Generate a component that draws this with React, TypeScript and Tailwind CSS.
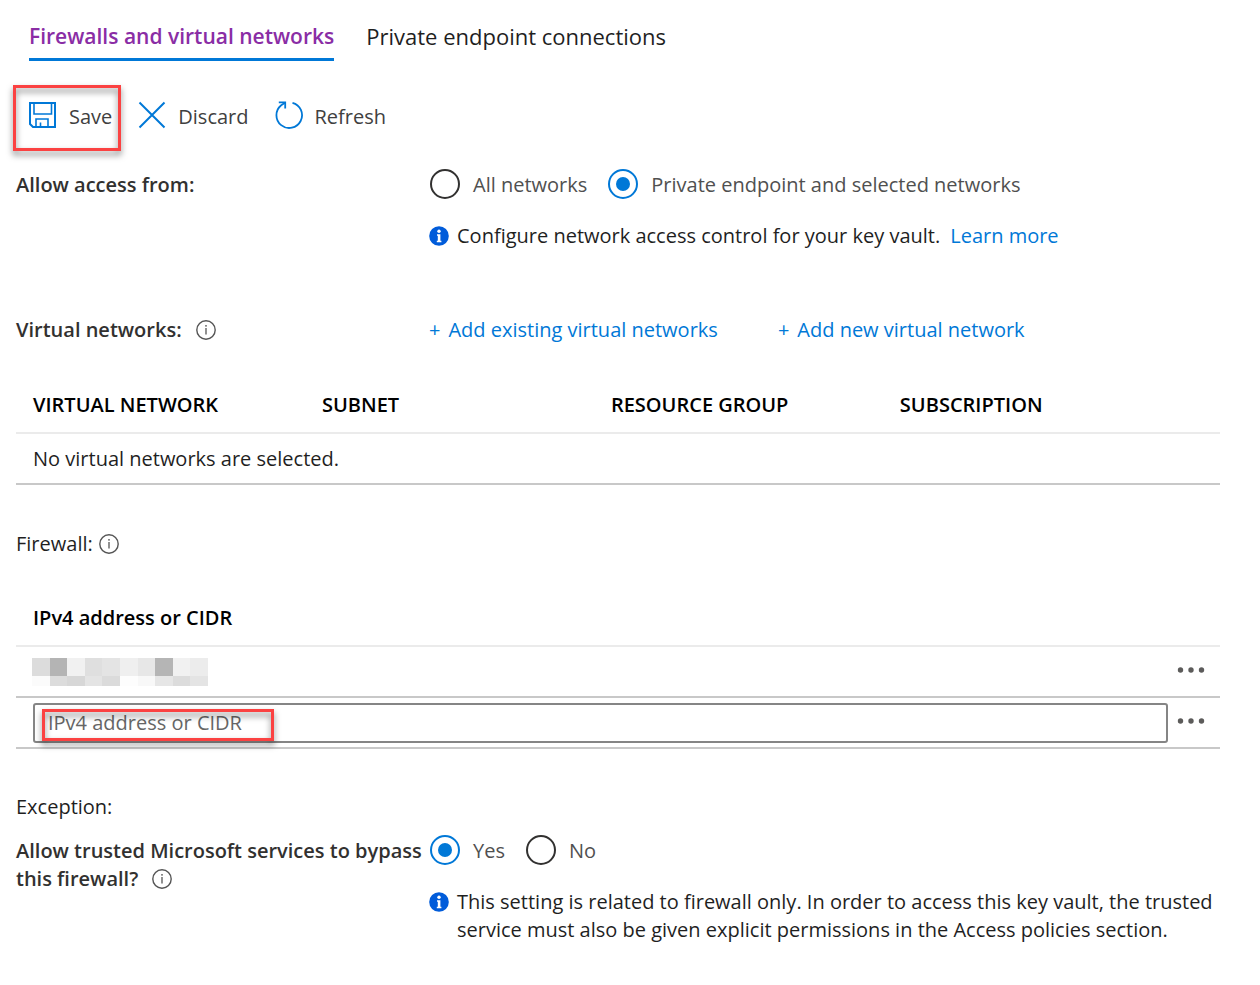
import React from "react";

const highlight =
  "pointer-events-none absolute border-3 border-[#fb4242] drop-shadow-[0_4px_3px_rgba(0,0,0,0.5)]";

function SaveIcon() {
  return (
    <svg className="h-[28px] w-[28px] shrink-0" viewBox="0 0 28 28" fill="none" stroke="#0078d7" strokeWidth="2" aria-hidden="true">
      <path d="M1 2h25v24H4l-3-3z" />
      <path d="M5 2v11h17.5V2" strokeWidth="1.6" />
      <path d="M7 26v-8h12v8M11.5 26v-4.5" strokeWidth="1.6" />
    </svg>
  );
}

function DiscardIcon() {
  return (
    <svg className="h-[28px] w-[28px] shrink-0" viewBox="0 0 28 28" fill="none" stroke="#0078d7" strokeWidth="2" aria-hidden="true">
      <path d="M1.5 1.5l25 25M26.5 1.5l-25 25" />
    </svg>
  );
}

function RefreshIcon() {
  return (
    <svg className="h-[28px] w-[28px] shrink-0" viewBox="0 0 28 28" fill="none" stroke="#0078d7" strokeWidth="1.8" aria-hidden="true">
      <path d="M17.5 1.8A12.8 12.8 0 1 1 6.2 4.2L10 1.8" />
      <path d="M3.8 1.4H10.2V7.5" />
    </svg>
  );
}

function HelpIcon() {
  return (
    <svg className="h-[20px] w-[20px] shrink-0" viewBox="0 0 20 20" fill="none" aria-hidden="true">
      <circle cx="10" cy="10" r="9.2" stroke="#555" strokeWidth="1.4" />
      <path d="M10 8v6.5" stroke="#555" strokeWidth="1.3" />
      <circle cx="10" cy="5.8" r="0.9" fill="#555" />
    </svg>
  );
}

function InfoIcon() {
  return (
    <svg className="mt-[4px] h-[20px] w-[20px] shrink-0" viewBox="0 0 20 20" aria-hidden="true">
      <circle cx="10" cy="10" r="9.8" fill="#015cda" />
      <circle cx="10" cy="5.2" r="1.7" fill="#fff" />
      <path d="M8 8.3h3.4v6.4h1v1.6H7.8v-1.6h1V9.8H8z" fill="#fff" />
    </svg>
  );
}

function Radio({ name, label, defaultChecked }: { name: string; label: string; defaultChecked?: boolean }) {
  return (
    <label className="flex items-start gap-[13px] text-[#505050]">
      <input
        type="radio"
        name={name}
        defaultChecked={defaultChecked}
        className="grid h-[30px] w-[30px] shrink-0 appearance-none place-content-center rounded-full border-2 border-[#323130] bg-white before:h-[14px] before:w-[14px] before:rounded-full checked:border-[#0078d7] checked:before:bg-[#0078d7]"
      />
      <span className="leading-[32px]">{label}</span>
    </label>
  );
}

function ToolButton({ icon, label, children }: { icon: React.ReactNode; label: string; children?: React.ReactNode }) {
  return (
    <button type="button" className="relative flex items-start gap-[12px]">
      {icon}
      <span className="leading-[32px]">{label}</span>
      {children}
    </button>
  );
}

function AddButton({ label }: { label: string }) {
  return (
    <button type="button" className="flex gap-[8px]">
      <span>+</span>
      <span>{label}</span>
    </button>
  );
}

function MoreButton() {
  return (
    <button type="button" aria-label="More options" className="block pb-[4px]">
      <svg className="h-[8px] w-[28px]" viewBox="0 0 28 8" fill="#5c5b5a" aria-hidden="true">
        <circle cx="3.5" cy="4" r="2.7" />
        <circle cx="14" cy="4" r="2.7" />
        <circle cx="24.5" cy="4" r="2.7" />
      </svg>
    </button>
  );
}

const mosaicTop = ["#dcdcdc", "#b4b4b4", "#f1f1f1", "#dfdfdf", "#e4e4e4", "#efefef", "#e7e7e7", "#b5b5b5", "#f1f1f1", "#ececec"];
const mosaicBottom = ["#fbfbfb", "#dcdcdc", "#d7d7d7", "#e4e4e4", "#dbdbdb", "#fdfdfd", "#f8f8f8", "#e6e6e6", "#dcdcdc", "#e4e4e4"];

function HiddenAddress() {
  return (
    <svg className="block h-[28px] w-[176px]" viewBox="0 0 176 28" shapeRendering="crispEdges" role="img" aria-label="Hidden address">
      {mosaicTop.map((c, i) => (
        <rect key={i} x={i * 17.6} y="0" width="17.6" height="18" fill={c} />
      ))}
      {mosaicBottom.map((c, i) => (
        <rect key={i} x={i * 17.6} y="18" width="17.6" height="10" fill={c} />
      ))}
    </svg>
  );
}

export default function App() {
  return (
    <main className="bg-white pt-[13px] pb-[40px] pl-[16px] font-['Open_Sans','Noto_Sans',sans-serif] text-[20px] leading-[28px] text-[#1f1f1f]">
      <nav className="flex gap-[32px] pl-[13px]">
        <a href="#firewalls" className="flex h-[48px] items-center border-b-3 border-[#0078d7] text-[21px] font-semibold text-[#8a2da5]">
          Firewalls and virtual networks
        </a>
        <a href="#private" className="flex h-[48px] items-center border-b-3 border-transparent text-[22px]">
          Private endpoint connections
        </a>
      </nav>

      <div className="mt-[40px] flex gap-[26px] pl-[13px] text-[#404040]">
        <ToolButton icon={<SaveIcon />} label="Save">
          <span className={`${highlight} -top-[16px] -right-[9px] -left-[16px] h-[66px]`} />
        </ToolButton>
        <ToolButton icon={<DiscardIcon />} label="Discard" />
        <ToolButton icon={<RefreshIcon />} label="Refresh" />
      </div>

      <section className="mt-[36px] grid grid-cols-[413px_1fr]">
        <h2 className="pt-[2px] font-semibold text-[#323130]">Allow access from:</h2>
        <div>
          <div className="flex gap-[21px] pl-px">
            <Radio name="access" label="All networks" />
            <Radio name="access" label="Private endpoint and selected networks" defaultChecked />
          </div>
          <p className="mt-[21px] flex gap-[8px]">
            <InfoIcon />
            <span>
              Configure network access control for your key vault.
              <a href="#learn" className="ml-[10px] text-[#0078d7]">Learn more</a>
            </span>
          </p>
        </div>
      </section>

      <section className="mt-[66px] grid grid-cols-[413px_1fr]">
        <h2 className="flex items-center gap-[14px] font-semibold text-[#323130]">
          Virtual networks: <HelpIcon />
        </h2>
        <div className="flex gap-[60px] text-[#0078d7]">
          <AddButton label="Add existing virtual networks" />
          <AddButton label="Add new virtual network" />
        </div>
      </section>

      <div className="mt-[34px] pr-[40px]">
        <table className="w-full table-fixed border-collapse text-left">
          <colgroup>
            <col className="w-[24%]" />
            <col className="w-[24%]" />
            <col className="w-[24%]" />
            <col className="w-[28%]" />
          </colgroup>
          <thead>
            <tr className="h-[55px] border-b-2 border-[#ebebeb] text-black">
              <th className="pl-[17px] font-semibold">VIRTUAL NETWORK</th>
              <th className="pl-[17px] font-semibold">SUBNET</th>
              <th className="pl-[17px] font-semibold">RESOURCE GROUP</th>
              <th className="pl-[17px] font-semibold">SUBSCRIPTION</th>
            </tr>
          </thead>
          <tbody>
            <tr className="h-[51px] border-b-2 border-[#c8c8c8]">
              <td colSpan={4} className="pl-[17px]">No virtual networks are selected.</td>
            </tr>
          </tbody>
        </table>
      </div>

      <h2 className="mt-[45px] flex items-center gap-[6px]">
        Firewall: <HelpIcon />
      </h2>

      <div className="mt-[33px] pr-[40px]">
        <table className="w-full border-collapse text-left">
          <thead>
            <tr className="h-[55px] border-b-2 border-[#ebebeb] text-black">
              <th colSpan={2} className="pl-[17px] font-semibold">IPv4 address or CIDR</th>
            </tr>
          </thead>
          <tbody>
            <tr className="h-[51px] border-b-2 border-[#c8c8c8]">
              <td className="pl-[16px]"><HiddenAddress /></td>
              <td className="w-[52px] pl-[9px]"><MoreButton /></td>
            </tr>
            <tr className="h-[51px] border-b-2 border-[#c8c8c8]">
              <td className="pl-[17px]">
                <div className="relative">
                  <input
                    type="text"
                    aria-label="IPv4 address or CIDR"
                    placeholder="IPv4 address or CIDR"
                    className="block h-[40px] w-full rounded-[3px] border-2 border-[#858585] bg-white pl-[13px] placeholder:text-[#666]"
                  />
                  <span className={`${highlight} top-[6px] left-[9px] h-[32px] w-[232px]`} />
                </div>
              </td>
              <td className="w-[52px] pl-[9px]"><MoreButton /></td>
            </tr>
          </tbody>
        </table>
      </div>

      <h2 className="mt-[44px]">Exception:</h2>

      <section className="mt-[14px] grid grid-cols-[413px_1fr]">
        <h3 className="pt-[2px] font-semibold text-[#323130]">
          <span className="whitespace-nowrap">Allow trusted Microsoft services to bypass</span>
          <span className="flex items-center gap-[14px]">
            this firewall? <HelpIcon />
          </span>
        </h3>
        <div>
          <div className="flex gap-[21px] pl-px">
            <Radio name="bypass" label="Yes" defaultChecked />
            <Radio name="bypass" label="No" />
          </div>
          <p className="mt-[21px] flex gap-[8px] pr-[24px]">
            <InfoIcon />
            <span>
              This setting is related to firewall only. In order to access this key vault, the trusted service must
              also be given explicit permissions in the Access policies section.
            </span>
          </p>
        </div>
      </section>
    </main>
  );
}
